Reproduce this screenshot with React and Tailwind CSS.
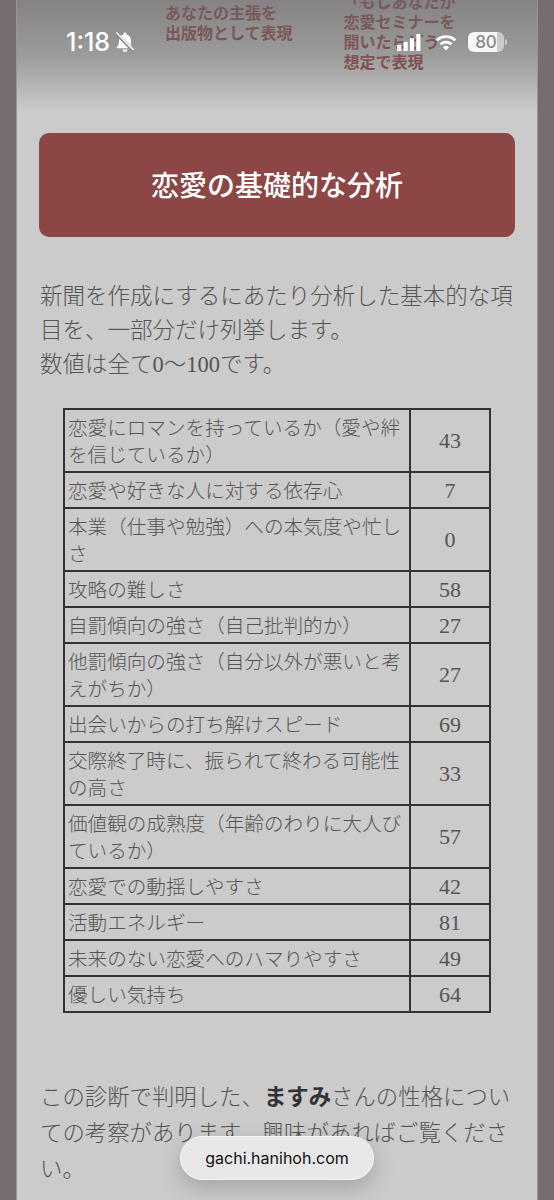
const rows = [
  ['恋愛にロマンを持っているか（愛や絆を信じているか）', 43],
  ['恋愛や好きな人に対する依存心', 7],
  ['本業（仕事や勉強）への本気度や忙しさ', 0],
  ['攻略の難しさ', 58],
  ['自罰傾向の強さ（自己批判的か）', 27],
  ['他罰傾向の強さ（自分以外が悪いと考えがちか）', 27],
  ['出会いからの打ち解けスピード', 69],
  ['交際終了時に、振られて終わる可能性の高さ', 33],
  ['価値観の成熟度（年齢のわりに大人びているか）', 57],
  ['恋愛での動揺しやすさ', 42],
  ['活動エネルギー', 81],
  ['未来のない恋愛へのハマりやすさ', 49],
  ['優しい気持ち', 64],
]

const serif = "font-['Liberation_Serif','Noto_Sans_CJK_JP',serif]"

function StatusBar() {
  return (
    <div className="absolute inset-x-0 top-0 h-[112px] bg-gradient-to-b from-[#6d6a6bc0] via-[#7573748a] to-[#76737400]">
      <div className="flex items-center h-[32px] mt-[26px] pl-[49px] pr-[30px] text-white">
        <span className="text-[25px] font-medium font-['Inter',sans-serif] leading-none">1:18</span>
        <svg width="20" height="22" viewBox="0 0 20 22" className="ml-[5px]" fill="white">
          <path d="M10 1.500c-.8 0-1.400.6-1.400 1.400v.5C5.800 4 4 6.400 4 9.500c0 3.200-.6 5-2.300 6.800v1h15.600v-1C15.600 14.500 16 12.700 16 9.500 16 6.400 14.200 4 11.400 3.400v-.5c0-.8-.6-1.400-1.400-1.400z" />
          <path d="M7.600 18.500a2.400 2.400 0 0 0 4.800 0z" />
          <path d="M1.500 2.500 18.500 20" stroke="#8b8889" strokeWidth="3.500" />
          <path d="M1.500 1.500 18.500 19" stroke="white" strokeWidth="1.600" />
        </svg>
        <div className="flex-1" />
        <svg width="26" height="17" viewBox="0 0 28 20" fill="white" className="mr-[13px]">
          <rect x="0" y="13" width="5" height="7" rx="1" />
          <rect x="7.500" y="9" width="5" height="11" rx="1" />
          <rect x="15" y="5" width="5" height="15" rx="1" />
          <rect x="22.500" y="0" width="5" height="20" rx="1" />
        </svg>
        <svg width="22" height="17" viewBox="0 0 26 20" fill="none" stroke="white" strokeWidth="3.200" className="mr-[11px]">
          <path d="M2 7.500a16 16 0 0 1 22 0" />
          <path d="M6.500 12a10 10 0 0 1 13 0" />
          <path d="M13 19.500l-3.500-3.800a5 5 0 0 1 7 0z" fill="white" stroke="none" />
        </svg>
        <div className="flex items-center">
          <div className="w-[36px] h-[20px] rounded-[6px] bg-gradient-to-r from-[#ffffffea] from-80% to-[#ffffff80] to-80% text-[#8a8a8a] text-[17px] font-medium font-['Inter',sans-serif] leading-[20px] text-center">80</div>
          <div className="w-[2px] h-[6px] ml-[1px] rounded-r-sm bg-[#ffffff80]" />
        </div>
      </div>
    </div>
  )
}

export default function App() {
  return (
    <div className="relative h-[1200px] overflow-hidden bg-[#776d6e]">
      <div className={`relative mx-[16px] h-[1200px] overflow-hidden bg-[#cbcbcb] border-x border-[#9a9596] ${serif}`}>
        {/* cut off article header */}
        <div className="flex h-[133px] font-['Noto_Sans_CJK_JP',sans-serif] font-bold text-[16px] leading-[20px] text-[#8b3030]">
          <div className="ml-[148px] mt-[2px]">
            <p>あなたの主張を</p>
            <p>出版物として表現</p>
          </div>
          <div className="ml-[51px] -mt-[9px]">
            <p>「もしあなたが</p>
            <p>恋愛セミナーを</p>
            <p>開いたらどう</p>
            <p>想定で表現</p>
          </div>
        </div>

        <div className="mx-[22px] h-[104px] pt-[3px] flex items-center justify-center rounded-[10px] bg-[#8c4646] text-white text-[28px] font-medium">
          恋愛の基礎的な分析
        </div>

        <p className="mx-[23px] mt-[43px] text-[22.500px] leading-[34px] font-light text-[#555]">
          新聞を作成にするにあたり分析した基本的な項目を、一部分だけ列挙します。<br />
          数値は全て0〜100です。
        </p>

        <table className="ml-[46px] mt-[26px] w-[428px] border-collapse table-fixed text-[#555]">
          <tbody>
            {rows.map(([label, value]) => (
              <tr key={label}>
                <td className="w-[346px] border-2 border-[#333] pl-[3px] pr-[2px] pt-[5px] pb-[2px] text-[19.600px] leading-[27px] font-light">{label}</td>
                <td className="border-2 border-[#333] text-center text-[22px]">{value}</td>
              </tr>
            ))}
          </tbody>
        </table>

        <p className="ml-[23px] mr-[20px] mt-[67px] text-[22.400px] leading-[36px] font-light text-[#555]">
          この診断で判明した、<b className="font-bold text-[#333]">ますみ</b>さんの性格についての考察があります。興味があればご覧ください。
        </p>
        <StatusBar />
      </div>

      <div className="absolute left-[180px] top-[1136px] w-[194px] h-[44px] rounded-full bg-[#e8e8e8] border border-[#f4f4f4] shadow-[0_8px_24px_rgba(0,0,0,0.2)] flex items-center justify-center font-['Inter',sans-serif] text-[16px] text-[#111]">
        gachi.hanihoh.com
      </div>
    </div>
  )
}
